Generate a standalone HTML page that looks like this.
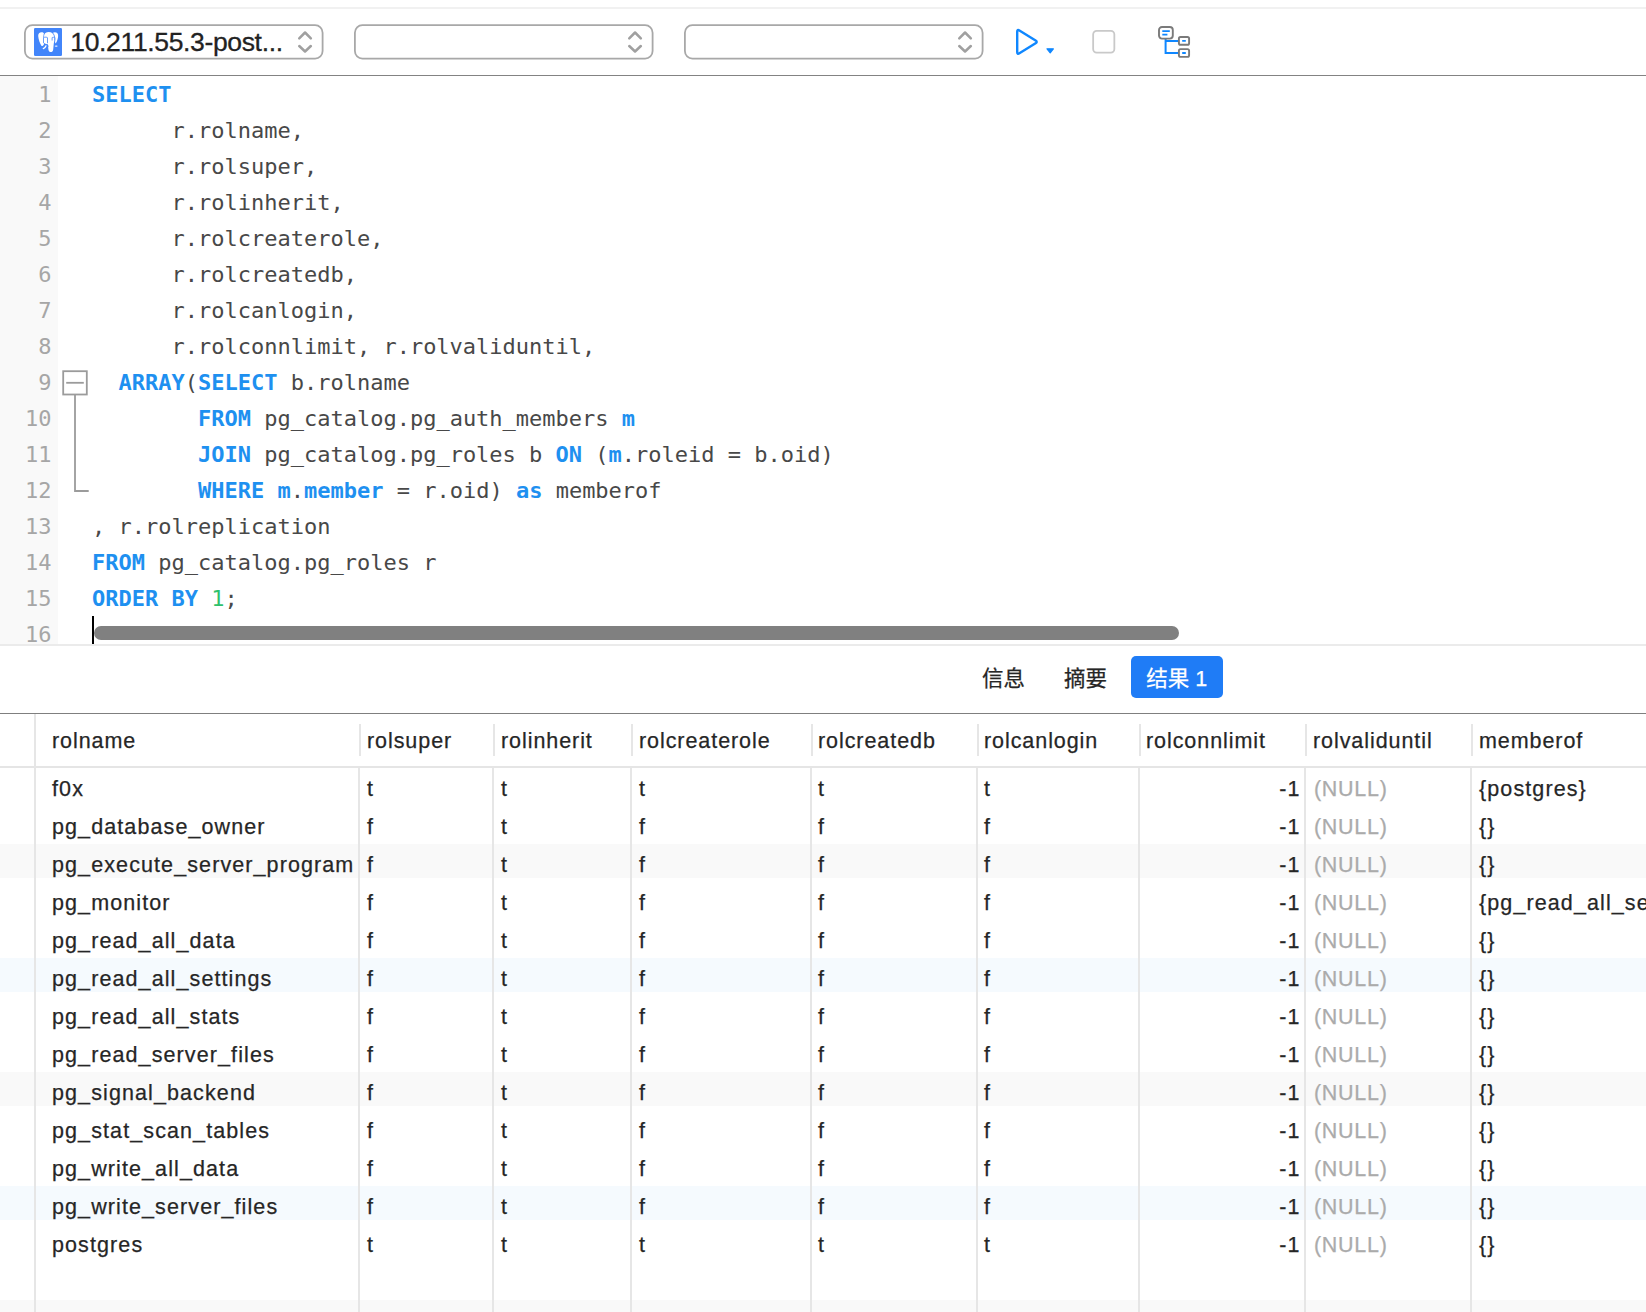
<!DOCTYPE html>
<html><head><meta charset="utf-8"><title>Query</title>
<style>
html,body{margin:0;padding:0;background:#fff;}
body{width:1646px;height:1312px;position:relative;overflow:hidden;font-family:"Liberation Sans","Noto Sans CJK SC",sans-serif;color:#262626;}
.abs{position:absolute;}
.sel{position:absolute;top:24px;height:36px;width:300px;}
.chev{position:absolute;left:273px;top:5px;}
#conn{position:absolute;left:46.300px;top:1px;-webkit-text-stroke:0.3px;font-size:26.500px;line-height:35px;letter-spacing:-0.350px;color:#222;white-space:nowrap;}
#gutter{position:absolute;left:0;top:76px;width:58px;height:569px;background:#f9f9f9;}
.ln{position:absolute;left:0;width:51.5px;text-align:right;font-family:"DejaVu Sans Mono","Liberation Mono",monospace;font-size:22px;line-height:36px;height:36px;color:#a6a6a6;}
.cl{position:absolute;left:92px;font-family:"DejaVu Sans Mono","Liberation Mono",monospace;font-size:22px;line-height:36px;height:36px;white-space:pre;color:#484848;}
.cl b{color:#1e90f0;font-weight:bold;}
.cl i{color:#2fc16c;font-style:normal;}
.tab{-webkit-text-stroke:0.25px;position:absolute;top:656px;height:41.5px;line-height:46px;font-size:21.5px;color:#262626;white-space:nowrap;}
.vs{position:absolute;width:2px;background:#e6e6e6;}
.hd{position:absolute;top:725px;height:32px;line-height:32px;font-size:21.5px;letter-spacing:0.93px;-webkit-text-stroke:0.25px;color:#262626;white-space:nowrap;}
.stripe{position:absolute;left:0;width:1646px;height:34px;}
.c{position:absolute;height:38px;line-height:38px;font-size:21.5px;letter-spacing:1.1px;-webkit-text-stroke:0.25px;color:#262626;white-space:nowrap;}
.n{color:#ababab;letter-spacing:0.7px;}
</style></head><body>

<div class="abs" style="left:0;top:7px;width:1646px;height:1.5px;background:#f1f1f1"></div>
<div class="sel" style="left:24px"><svg class="abs" style="left:0;top:0" width="300" height="36" viewBox="0 0 300 36"><rect x="0.900" y="1.200" width="297.700" height="33.400" rx="7.500" fill="#fff" stroke="#a8a8a8" stroke-width="1.800"/></svg><svg class="abs" style="left:10px;top:4px" width="28" height="28" viewBox="0 0 28 28"><rect x="0" y="0" width="28" height="28" rx="1.200" fill="#4285fa"/>
<path d="M4.200 8 C4 5.500 5.500 4.200 7.500 4.200 C9 4.200 10 4.800 10.200 6 L10 16 C9.500 17.500 8.500 18.200 7.600 18 C6 16 4.500 11.500 4.200 8 Z" fill="#fff"/>
<path d="M10 7 C10.500 5 12.500 4 14.700 4 C17.500 4 19.600 5.500 20.200 8 C20.600 10.500 20.300 13 19.800 15.500 L19.200 21.500 C19 23.300 18 24.100 16.800 24.100 C15.400 24.100 14.600 23 14.400 21.500 L13.900 16.500 C13.200 16.300 11 16 10 15 Z" fill="#fff"/>
<path d="M18.600 4.900 C20 3.900 22.300 4 23.400 5.200 C24.500 6.600 24.200 9.200 23.500 11.600 C23 13.500 22.300 14.800 21.500 15.400 C20.900 14 20.600 12 20.600 10 C20.600 8 19.800 6 18.600 4.900 Z" fill="#fff"/>
<path d="M20.700 9.400 C21.600 9.200 22.100 10 21.900 11.500 C21.700 13 21.400 13.800 21.100 14.200 C20.800 12.500 20.700 11 20.700 9.400Z" fill="#c6dcfe"/>
<path d="M9.500 15.200 L9.500 9.600 C11 8.900 13 9.100 13.500 9.700 L13.500 15.200" stroke="#4285fa" stroke-width="0.800" fill="none"/>
<path d="M18.100 12.500 L18.100 9.600 C19 9.100 20.200 9.200 20.600 9.700" stroke="#4285fa" stroke-width="0.800" fill="none"/>
<path d="M9.500 9.500 C9.600 7 10.200 5.200 11.200 4.200 M18.400 4.600 C20.300 6.400 21 9 20.700 12.500" stroke="#4285fa" stroke-width="0.700" fill="none"/>
<path d="M10.400 15.600 C11.500 16.600 13 16.900 13.800 17 L14 19" stroke="#4285fa" stroke-width="0.800" fill="none"/>
<path d="M12 17.800 C11.500 19.200 10.500 20.200 9.300 20.600" stroke="#fff" stroke-width="1.300" fill="none" stroke-linecap="round"/>
<ellipse cx="22.200" cy="18.100" rx="1.500" ry="0.700" fill="#fff"/>
</svg><div id="conn">10.211.55.3-post...</div><svg class="chev" width="16" height="26" viewBox="0 0 16 26"><path d="M2.250 9.350 L8.050 3.500 L13.850 9.350 M2.250 17 L8.050 22.500 L13.850 17" fill="none" stroke="#a0a0a0" stroke-width="2.500" stroke-linecap="round" stroke-linejoin="round"/></svg></div>
<div class="sel" style="left:354px"><svg class="abs" style="left:0;top:0" width="300" height="36" viewBox="0 0 300 36"><rect x="0.900" y="1.200" width="297.700" height="33.400" rx="7.500" fill="#fff" stroke="#a8a8a8" stroke-width="1.800"/></svg><svg class="chev" width="16" height="26" viewBox="0 0 16 26"><path d="M2.250 9.350 L8.050 3.500 L13.850 9.350 M2.250 17 L8.050 22.500 L13.850 17" fill="none" stroke="#a0a0a0" stroke-width="2.500" stroke-linecap="round" stroke-linejoin="round"/></svg></div>
<div class="sel" style="left:684px"><svg class="abs" style="left:0;top:0" width="300" height="36" viewBox="0 0 300 36"><rect x="0.900" y="1.200" width="297.700" height="33.400" rx="7.500" fill="#fff" stroke="#a8a8a8" stroke-width="1.800"/></svg><svg class="chev" width="16" height="26" viewBox="0 0 16 26"><path d="M2.250 9.350 L8.050 3.500 L13.850 9.350 M2.250 17 L8.050 22.500 L13.850 17" fill="none" stroke="#a0a0a0" stroke-width="2.500" stroke-linecap="round" stroke-linejoin="round"/></svg></div>
<svg class="abs" style="left:1010px;top:22px" width="50" height="40" viewBox="0 0 50 40">
<path d="M9.408 8.472 Q7.200 7.100 7.200 9.700 L7.200 30.100 Q7.200 32.700 9.408 31.328 L25.592 21.272 Q27.800 19.900 25.592 18.528 Z" fill="none" stroke="#0f87ff" stroke-width="2.400" stroke-linejoin="round"/>
<path d="M37 26.800 L43.400 26.800 L40.200 30.800 Z" fill="#0f87ff" stroke="#0f87ff" stroke-width="1.200" stroke-linejoin="round"/></svg>
<svg class="abs" style="left:1090px;top:28px" width="28" height="28" viewBox="0 0 28 28"><rect x="3.150" y="2.900" width="21.200" height="21.700" rx="3.500" fill="#fff" stroke="#c9c9c9" stroke-width="1.800"/></svg>
<svg class="abs" style="left:1155px;top:23px" width="40" height="40" viewBox="0 0 40 40">
<path d="M10.600 15 L10.600 29.900 L23 29.900 M10.600 18.100 L23 18.100" fill="none" stroke="#0f87ff" stroke-width="2"/>
<rect x="4" y="4" width="13.800" height="11.600" rx="3" fill="#fff" stroke="#7a7a7a" stroke-width="1.900"/>
<path d="M7.300 8.200 L14.800 8.200 M7.300 11.700 L12.400 11.700" stroke="#0f87ff" stroke-width="1.800"/>
<rect x="23.900" y="14" width="10.200" height="7.800" rx="1.600" fill="#fff" stroke="#7a7a7a" stroke-width="1.900"/>
<rect x="23.900" y="26.100" width="10.200" height="7.800" rx="1.600" fill="#fff" stroke="#7a7a7a" stroke-width="1.900"/>
<path d="M27.200 17.900 L30.800 17.900 M27.200 30 L30.800 30" stroke="#0f87ff" stroke-width="1.800"/>
</svg>
<div class="abs" style="left:0;top:75px;width:1646px;height:1px;background:#838383"></div>
<div id="gutter"></div>
<div class="ln" style="top:77px">1</div><div class="cl" style="top:77px"><b>SELECT</b></div>
<div class="ln" style="top:113px">2</div><div class="cl" style="top:113px">      r.rolname,</div>
<div class="ln" style="top:149px">3</div><div class="cl" style="top:149px">      r.rolsuper,</div>
<div class="ln" style="top:185px">4</div><div class="cl" style="top:185px">      r.rolinherit,</div>
<div class="ln" style="top:221px">5</div><div class="cl" style="top:221px">      r.rolcreaterole,</div>
<div class="ln" style="top:257px">6</div><div class="cl" style="top:257px">      r.rolcreatedb,</div>
<div class="ln" style="top:293px">7</div><div class="cl" style="top:293px">      r.rolcanlogin,</div>
<div class="ln" style="top:329px">8</div><div class="cl" style="top:329px">      r.rolconnlimit, r.rolvaliduntil,</div>
<div class="ln" style="top:365px">9</div><div class="cl" style="top:365px">  <b>ARRAY</b>(<b>SELECT</b> b.rolname</div>
<div class="ln" style="top:401px">10</div><div class="cl" style="top:401px">        <b>FROM</b> pg_catalog.pg_auth_members <b>m</b></div>
<div class="ln" style="top:437px">11</div><div class="cl" style="top:437px">        <b>JOIN</b> pg_catalog.pg_roles b <b>ON</b> (<b>m</b>.roleid = b.oid)</div>
<div class="ln" style="top:473px">12</div><div class="cl" style="top:473px">        <b>WHERE</b> <b>m</b>.<b>member</b> = r.oid) <b>as</b> memberof</div>
<div class="ln" style="top:509px">13</div><div class="cl" style="top:509px">, r.rolreplication</div>
<div class="ln" style="top:545px">14</div><div class="cl" style="top:545px"><b>FROM</b> pg_catalog.pg_roles r</div>
<div class="ln" style="top:581px">15</div><div class="cl" style="top:581px"><b>ORDER BY</b> <i>1</i>;</div>
<div class="ln" style="top:617px">16</div><div class="cl" style="top:617px"></div>
<svg class="abs" style="left:60px;top:368px" width="32" height="128" viewBox="0 0 32 128">
<rect x="3.200" y="3.200" width="23.600" height="23.300" fill="#fff" stroke="#9b9b9b" stroke-width="1.800"/>
<path d="M6.200 14.800 L23.800 14.800" stroke="#9b9b9b" stroke-width="1.800"/>
<path d="M15 27 L15 123 L28.700 123" fill="none" stroke="#9b9b9b" stroke-width="1.800"/></svg>
<div class="abs" style="left:92px;top:616px;width:2px;height:28px;background:#000"></div>
<div class="abs" style="left:94px;top:626px;width:1085px;height:13.5px;border-radius:7px;background:#808080"></div>
<div class="abs" style="left:0;top:644px;width:1646px;height:2px;background:#ebebeb"></div>
<div class="tab" style="left:982px">信息</div>
<div class="tab" style="left:1064px">摘要</div>
<div class="tab" style="left:1131px;width:91.5px;background:#1f7cf6;border-radius:5px;color:#fff;text-align:center">结果 1</div>
<div class="abs" style="left:0;top:713px;width:1646px;height:1px;background:#7f7f7f"></div>
<div class="stripe" style="top:844px;background:#f9f9f9"></div>
<div class="stripe" style="top:958px;background:#f5fafe"></div>
<div class="stripe" style="top:1072px;background:#f9f9f9"></div>
<div class="stripe" style="top:1186px;background:#f5fafe"></div>
<div class="stripe" style="top:1300px;background:#f9f9f9"></div>
<div class="abs" style="left:0;top:766px;width:1646px;height:2px;background:#e5e5e5"></div>
<div class="vs" style="left:34px;top:714px;height:598px"></div>
<div class="vs" style="left:359px;top:724px;height:32px"></div>
<div class="vs" style="left:358px;top:768px;height:544px"></div>
<div class="vs" style="left:493px;top:724px;height:32px"></div>
<div class="vs" style="left:492px;top:768px;height:544px"></div>
<div class="vs" style="left:631px;top:724px;height:32px"></div>
<div class="vs" style="left:630px;top:768px;height:544px"></div>
<div class="vs" style="left:811px;top:724px;height:32px"></div>
<div class="vs" style="left:810px;top:768px;height:544px"></div>
<div class="vs" style="left:977px;top:724px;height:32px"></div>
<div class="vs" style="left:976px;top:768px;height:544px"></div>
<div class="vs" style="left:1139px;top:724px;height:32px"></div>
<div class="vs" style="left:1138px;top:768px;height:544px"></div>
<div class="vs" style="left:1305px;top:724px;height:32px"></div>
<div class="vs" style="left:1304px;top:768px;height:544px"></div>
<div class="vs" style="left:1471px;top:724px;height:32px"></div>
<div class="vs" style="left:1470px;top:768px;height:544px"></div>
<div class="hd" style="left:52px">rolname</div>
<div class="hd" style="left:367px">rolsuper</div>
<div class="hd" style="left:501px">rolinherit</div>
<div class="hd" style="left:639px">rolcreaterole</div>
<div class="hd" style="left:818px">rolcreatedb</div>
<div class="hd" style="left:984px">rolcanlogin</div>
<div class="hd" style="left:1146px">rolconnlimit</div>
<div class="hd" style="left:1313px">rolvaliduntil</div>
<div class="hd" style="left:1479px">memberof</div>
<div class="c" style="left:52px;top:770px">f0x</div>
<div class="c" style="left:367px;top:770px">t</div>
<div class="c" style="left:501px;top:770px">t</div>
<div class="c" style="left:639px;top:770px">t</div>
<div class="c" style="left:818px;top:770px">t</div>
<div class="c" style="left:984px;top:770px">t</div>
<div class="c" style="left:1200px;width:100.5px;text-align:right;top:770px">-1</div>
<div class="c n" style="left:1314px;top:770px">(NULL)</div>
<div class="c" style="left:1479px;top:770px">{postgres}</div>
<div class="c" style="left:52px;top:808px">pg_database_owner</div>
<div class="c" style="left:367px;top:808px">f</div>
<div class="c" style="left:501px;top:808px">t</div>
<div class="c" style="left:639px;top:808px">f</div>
<div class="c" style="left:818px;top:808px">f</div>
<div class="c" style="left:984px;top:808px">f</div>
<div class="c" style="left:1200px;width:100.5px;text-align:right;top:808px">-1</div>
<div class="c n" style="left:1314px;top:808px">(NULL)</div>
<div class="c" style="left:1479px;top:808px">{}</div>
<div class="c" style="left:52px;top:846px">pg_execute_server_program</div>
<div class="c" style="left:367px;top:846px">f</div>
<div class="c" style="left:501px;top:846px">t</div>
<div class="c" style="left:639px;top:846px">f</div>
<div class="c" style="left:818px;top:846px">f</div>
<div class="c" style="left:984px;top:846px">f</div>
<div class="c" style="left:1200px;width:100.5px;text-align:right;top:846px">-1</div>
<div class="c n" style="left:1314px;top:846px">(NULL)</div>
<div class="c" style="left:1479px;top:846px">{}</div>
<div class="c" style="left:52px;top:884px">pg_monitor</div>
<div class="c" style="left:367px;top:884px">f</div>
<div class="c" style="left:501px;top:884px">t</div>
<div class="c" style="left:639px;top:884px">f</div>
<div class="c" style="left:818px;top:884px">f</div>
<div class="c" style="left:984px;top:884px">f</div>
<div class="c" style="left:1200px;width:100.5px;text-align:right;top:884px">-1</div>
<div class="c n" style="left:1314px;top:884px">(NULL)</div>
<div class="c" style="left:1479px;top:884px">{pg_read_all_se</div>
<div class="c" style="left:52px;top:922px">pg_read_all_data</div>
<div class="c" style="left:367px;top:922px">f</div>
<div class="c" style="left:501px;top:922px">t</div>
<div class="c" style="left:639px;top:922px">f</div>
<div class="c" style="left:818px;top:922px">f</div>
<div class="c" style="left:984px;top:922px">f</div>
<div class="c" style="left:1200px;width:100.5px;text-align:right;top:922px">-1</div>
<div class="c n" style="left:1314px;top:922px">(NULL)</div>
<div class="c" style="left:1479px;top:922px">{}</div>
<div class="c" style="left:52px;top:960px">pg_read_all_settings</div>
<div class="c" style="left:367px;top:960px">f</div>
<div class="c" style="left:501px;top:960px">t</div>
<div class="c" style="left:639px;top:960px">f</div>
<div class="c" style="left:818px;top:960px">f</div>
<div class="c" style="left:984px;top:960px">f</div>
<div class="c" style="left:1200px;width:100.5px;text-align:right;top:960px">-1</div>
<div class="c n" style="left:1314px;top:960px">(NULL)</div>
<div class="c" style="left:1479px;top:960px">{}</div>
<div class="c" style="left:52px;top:998px">pg_read_all_stats</div>
<div class="c" style="left:367px;top:998px">f</div>
<div class="c" style="left:501px;top:998px">t</div>
<div class="c" style="left:639px;top:998px">f</div>
<div class="c" style="left:818px;top:998px">f</div>
<div class="c" style="left:984px;top:998px">f</div>
<div class="c" style="left:1200px;width:100.5px;text-align:right;top:998px">-1</div>
<div class="c n" style="left:1314px;top:998px">(NULL)</div>
<div class="c" style="left:1479px;top:998px">{}</div>
<div class="c" style="left:52px;top:1036px">pg_read_server_files</div>
<div class="c" style="left:367px;top:1036px">f</div>
<div class="c" style="left:501px;top:1036px">t</div>
<div class="c" style="left:639px;top:1036px">f</div>
<div class="c" style="left:818px;top:1036px">f</div>
<div class="c" style="left:984px;top:1036px">f</div>
<div class="c" style="left:1200px;width:100.5px;text-align:right;top:1036px">-1</div>
<div class="c n" style="left:1314px;top:1036px">(NULL)</div>
<div class="c" style="left:1479px;top:1036px">{}</div>
<div class="c" style="left:52px;top:1074px">pg_signal_backend</div>
<div class="c" style="left:367px;top:1074px">f</div>
<div class="c" style="left:501px;top:1074px">t</div>
<div class="c" style="left:639px;top:1074px">f</div>
<div class="c" style="left:818px;top:1074px">f</div>
<div class="c" style="left:984px;top:1074px">f</div>
<div class="c" style="left:1200px;width:100.5px;text-align:right;top:1074px">-1</div>
<div class="c n" style="left:1314px;top:1074px">(NULL)</div>
<div class="c" style="left:1479px;top:1074px">{}</div>
<div class="c" style="left:52px;top:1112px">pg_stat_scan_tables</div>
<div class="c" style="left:367px;top:1112px">f</div>
<div class="c" style="left:501px;top:1112px">t</div>
<div class="c" style="left:639px;top:1112px">f</div>
<div class="c" style="left:818px;top:1112px">f</div>
<div class="c" style="left:984px;top:1112px">f</div>
<div class="c" style="left:1200px;width:100.5px;text-align:right;top:1112px">-1</div>
<div class="c n" style="left:1314px;top:1112px">(NULL)</div>
<div class="c" style="left:1479px;top:1112px">{}</div>
<div class="c" style="left:52px;top:1150px">pg_write_all_data</div>
<div class="c" style="left:367px;top:1150px">f</div>
<div class="c" style="left:501px;top:1150px">t</div>
<div class="c" style="left:639px;top:1150px">f</div>
<div class="c" style="left:818px;top:1150px">f</div>
<div class="c" style="left:984px;top:1150px">f</div>
<div class="c" style="left:1200px;width:100.5px;text-align:right;top:1150px">-1</div>
<div class="c n" style="left:1314px;top:1150px">(NULL)</div>
<div class="c" style="left:1479px;top:1150px">{}</div>
<div class="c" style="left:52px;top:1188px">pg_write_server_files</div>
<div class="c" style="left:367px;top:1188px">f</div>
<div class="c" style="left:501px;top:1188px">t</div>
<div class="c" style="left:639px;top:1188px">f</div>
<div class="c" style="left:818px;top:1188px">f</div>
<div class="c" style="left:984px;top:1188px">f</div>
<div class="c" style="left:1200px;width:100.5px;text-align:right;top:1188px">-1</div>
<div class="c n" style="left:1314px;top:1188px">(NULL)</div>
<div class="c" style="left:1479px;top:1188px">{}</div>
<div class="c" style="left:52px;top:1226px">postgres</div>
<div class="c" style="left:367px;top:1226px">t</div>
<div class="c" style="left:501px;top:1226px">t</div>
<div class="c" style="left:639px;top:1226px">t</div>
<div class="c" style="left:818px;top:1226px">t</div>
<div class="c" style="left:984px;top:1226px">t</div>
<div class="c" style="left:1200px;width:100.5px;text-align:right;top:1226px">-1</div>
<div class="c n" style="left:1314px;top:1226px">(NULL)</div>
<div class="c" style="left:1479px;top:1226px">{}</div>
</body></html>
